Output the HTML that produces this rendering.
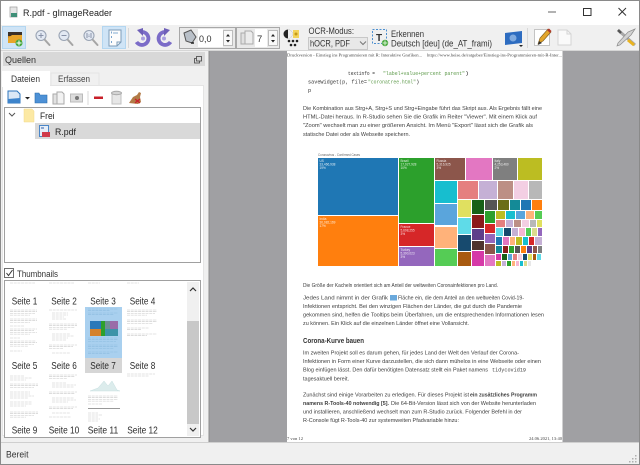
<!DOCTYPE html>
<html lang="de"><head><meta charset="utf-8"><title>R.pdf - gImageReader</title>
<style>
html,body{margin:0;padding:0;background:#f0f0f0}
body{width:640px;height:465px;overflow:hidden;position:relative;font-family:"Liberation Sans",sans-serif}
svg{position:absolute;left:0;top:0;filter:blur(.3px)}
</style></head><body>
<svg width="640" height="465" viewBox="0 0 640 465" font-family="Liberation Sans, sans-serif">
<rect width="640" height="465" fill="#f0f0f0"/>
<!-- title bar -->
<rect width="640" height="25" fill="#fff"/>
<rect x="0" y="0" width="640" height="1" fill="#8a8a8a"/>
<rect x="10" y="7" width="7" height="10" fill="#e6e6e6" stroke="#9a9a9a" stroke-width=".7"/>
<rect x="11" y="13" width="6" height="4" fill="#3f8f78"/>
<text x="23" y="16" font-size="9.600" fill="#222" textLength="89" lengthAdjust="spacingAndGlyphs">R.pdf - gImageReader</text>
<path d="M548 12h8" stroke="#666" stroke-width="1"/>
<rect x="583.500" y="8.500" width="7.500" height="7" fill="none" stroke="#333"/>
<path d="M618.500 8l7.500 7.500M626 8l-7.500 7.500" stroke="#333" stroke-width="1"/>
<!-- toolbar -->
<rect x="0" y="25" width="640" height="25" fill="#f0f0f0"/>
<rect x="2.500" y="26.500" width="23" height="22" fill="#cfe4f6" stroke="#b3d6f0"/>
<rect x="102.500" y="26.500" width="23" height="22" fill="#cfe4f6" stroke="#b3d6f0"/>
<path d="M8 32h14v11H8z" fill="#c98318"/><path d="M8 32h14v4H8z" fill="#3a3028"/><path d="M8 38l4-3h10v8H8z" fill="#e8a52a"/>
<circle cx="19" cy="43" r="3.500" fill="#46a73c"/><path d="M19 40.500v5M16.500 43h5" stroke="#fff" stroke-width="1"/>
<g fill="#e3e9f3" stroke="#9aa4b4" stroke-width="1.100">
<circle cx="41" cy="35.500" r="5"/><circle cx="64" cy="35.500" r="5"/><circle cx="89" cy="35.500" r="5"/></g>
<g stroke="#a5a5a5" stroke-width="2" stroke-linecap="round"><path d="M45 40l4.500 5M68 40l4.500 5M93 40l4.500 5"/></g>
<path d="M38.500 35.500h5M41 33v5M61.500 35.500h5" stroke="#8892a8" stroke-width="1"/>
<path d="M87 33v5M91 33v5M88.500 35h1M88.500 36.500h1" stroke="#8892a8" stroke-width="1"/>
<path d="M109 30h12v12l-4 4h-8z" fill="#fdfdfd" stroke="#7d9cb8"/><path d="M117 46v-4h4" fill="none" stroke="#7d9cb8"/>
<path d="M111.500 31.500v2M111.500 36v2M111.500 41v2M113 33h5" stroke="#5b8fc2" stroke-width=".8"/>
<rect x="128" y="28" width="1" height="20" fill="#d8d8d8"/>
<g fill="none" stroke="#7b6cc8" stroke-width="3.800">
<path d="M141 32a6.500 6.500 0 1 1-4.500 10"/><path d="M166 32a6.500 6.500 0 1 0 4.500 10"/></g>
<path d="M137 30l6-2v8zM170 30l-6-2v8z" fill="#6e5fb8"/>
<circle cx="143" cy="38.500" r="2" fill="#a99fe0"/><circle cx="164" cy="38.500" r="2" fill="#a99fe0"/>
<!-- spin boxes -->
<rect x="179.500" y="27.500" width="56" height="21" fill="#e9e9e9" stroke="#a8a8a8"/>
<rect x="236.500" y="27.500" width="43" height="21" fill="#e9e9e9" stroke="#a8a8a8"/>
<rect x="198" y="29" width="25" height="18" fill="#fff"/><rect x="255" y="29" width="12" height="18" fill="#fff"/>
<rect x="223.500" y="30.500" width="9" height="15" fill="#f8f8f8" stroke="#bcbcbc"/><rect x="268.500" y="30.500" width="9" height="15" fill="#f8f8f8" stroke="#bcbcbc"/>
<path d="M226 36.500l2-2.500 2 2.500zM226 40l2 2.500 2-2.500zM271 36.500l2-2.500 2 2.500zM271 40l2 2.500 2-2.500z" fill="#222"/>
<path d="M184 33l7-3 5 7-4 6-6-2z" fill="#b9c0c8" stroke="#555" stroke-width="1"/><path d="M191 43h3" stroke="#222" stroke-width="1.500"/>
<text x="199" y="42" font-size="9" fill="#333" textLength="12.500" lengthAdjust="spacingAndGlyphs">0,0</text>
<path d="M241 33h6v11h-6z" fill="#e0e0e0" stroke="#aaa"/><path d="M245 31h6l2 2v11h-8z" fill="#ececec" stroke="#aaa"/>
<text x="257" y="42" font-size="9.500" fill="#333">7</text>
<!-- contrast -->
<circle cx="288" cy="34" r="4.500" fill="#222"/><path d="M288 29.500a4.500 4.500 0 0 1 0 9z" fill="#eee"/>
<rect x="293" y="30" width="6" height="8" fill="#f3d35a"/><circle cx="296" cy="34" r="1.500" fill="#c49a18"/>
<g fill="#222"><circle cx="289" cy="41" r="1.300"/><circle cx="293" cy="41" r="1.300"/><circle cx="297" cy="41" r="1.300"/><circle cx="291" cy="45" r="1.300"/><circle cx="295" cy="45" r="1.300"/></g>
<!-- OCR -->
<text x="308.500" y="34" font-size="9" fill="#333" textLength="45.500" lengthAdjust="spacingAndGlyphs">OCR-Modus:</text>
<rect x="308.500" y="37.500" width="59" height="12" fill="#e8e8e8" stroke="#c8c8c8"/>
<text x="310" y="46.500" font-size="9" fill="#333" textLength="40" lengthAdjust="spacingAndGlyphs">hOCR, PDF</text>
<path d="M360 41.500l3 3 3-3" fill="none" stroke="#777"/>
<rect x="372.500" y="29.500" width="14" height="14" fill="none" stroke="#4d8fcf" stroke-dasharray="2 1.500"/>
<text x="376" y="41" font-size="10" font-weight="bold" fill="#333">T</text>
<circle cx="385" cy="43" r="3.200" fill="#48a83c"/><path d="M385 40.500v5M382.500 43h5" stroke="#d6f2d2" stroke-width="1"/>
<text x="391" y="37" font-size="9" fill="#333" textLength="33" lengthAdjust="spacingAndGlyphs">Erkennen</text>
<text x="391" y="46.500" font-size="9" fill="#333" textLength="101" lengthAdjust="spacingAndGlyphs">Deutsch [deu] (de_AT_frami)</text>
<path d="M505 33l17-2v12l-17 2z" fill="#2d6cc0"/><circle cx="513" cy="38" r="3.500" fill="#7faadf"/><path d="M519 45h4l-2 2z" fill="#222"/>
<rect x="527" y="28" width="1" height="20" fill="#d8d8d8"/>
<rect x="534.500" y="29.500" width="15" height="16" fill="#fff" stroke="#c4c4c4"/>
<path d="M538 44l2-6 8-9 3 3-8 9z" fill="#e3a52b" stroke="#7a5a20" stroke-width=".6"/><path d="M538 45l1-4 3 2z" fill="#333"/><path d="M547 30l3 3 1.500-2-2.500-2.500z" fill="#b23a2a"/>
<path d="M558 30h9l4 4v11h-13z" fill="#fafafa" stroke="#d4d4d4"/><path d="M567 30v4h4" fill="none" stroke="#d4d4d4"/>
<path d="M618 30l17 15" stroke="#a9a9a9" stroke-width="3"/><path d="M635 29l-7 3-10 11-1 3 3-1 11-10z" fill="#d2d2d2" stroke="#8c8c8c" stroke-width=".7"/>
<path d="M628 40l6 5" stroke="#e9b320" stroke-width="3"/><path d="M618 30l3 3" stroke="#555" stroke-width="2.500"/>
<rect x="0" y="50" width="640" height="1" fill="#d6d6d6"/>
<!-- gray view -->
<rect x="209" y="51" width="431" height="391" fill="#a0a0a3"/>
<rect x="208.500" y="51" width="1" height="391" fill="#8c8c8c"/>
<rect x="287" y="51" width="275.500" height="391" fill="#fff"/>
<!-- left dock -->
<rect x="3" y="52" width="202" height="14" fill="#d8d8d8"/>
<text x="5" y="63" font-size="9.200" fill="#333" textLength="31" lengthAdjust="spacingAndGlyphs">Quellen</text>
<rect x="194.500" y="58.500" width="5" height="4.500" fill="none" stroke="#444" stroke-width=".8"/><rect x="196.500" y="56.500" width="5" height="4.500" fill="#d8d8d8" stroke="#444" stroke-width=".8"/>
<rect x="51" y="73" width="48" height="13" fill="#f0f0f0" stroke="#e2e2e2" stroke-width=".8"/>
<rect x="2.500" y="85.500" width="201" height="350" fill="#fff" stroke="#e4e4e4"/>
<rect x="2" y="71" width="48" height="16" fill="#fff"/>
<text x="11" y="82" font-size="9" fill="#333" textLength="29" lengthAdjust="spacingAndGlyphs">Dateien</text>
<text x="58" y="82" font-size="9" fill="#444" textLength="32" lengthAdjust="spacingAndGlyphs">Erfassen</text>
<!-- small toolbar -->
<path d="M8 91h9l3 3v9H8z" fill="#dbe8f6" stroke="#2e75bc"/><path d="M8 99l12-1v5H8z" fill="#3d84cc"/>
<path d="M25 97h5l-2.500 2.500z" fill="#222"/>
<path d="M35 93h4l1 2h7v8H35z" fill="#4d91d6" stroke="#2a6cab" stroke-width=".6"/>
<path d="M53 94h6v10h-6z" fill="#e2e2e2" stroke="#aaa"/><path d="M57 92h5l2 2v10h-7z" fill="#f2f2f2" stroke="#aaa"/>
<rect x="70.500" y="94" width="12" height="8" fill="#dcdcdc" stroke="#bbb"/><circle cx="77" cy="98" r="2" fill="#777"/>
<rect x="87.500" y="91" width="1" height="14" fill="#d8d8d8"/>
<rect x="94" y="96.500" width="9" height="2.500" fill="#c8202a"/>
<path d="M112 93h9v11h-9z" fill="#e7e7e7" stroke="#c2c2c2"/><ellipse cx="116.500" cy="93" rx="5" ry="1.700" fill="#d4d4d4" stroke="#a8a8a8"/>
<path d="M129 103l4-6 4-2 2-3 2 1-1 4 1 5-3 2z" fill="#b27b47"/><path d="M135 99l5 4M140 99l-5 4" stroke="#c8202a" stroke-width="1.300"/>
<!-- tree -->
<rect x="4.500" y="107.500" width="196" height="155" fill="#fff" stroke="#a0a0a0"/>
<rect x="35" y="123" width="165" height="16" fill="#d9d9d9"/>
<path d="M9 113l3 3 3-3" fill="none" stroke="#555" stroke-width="1"/>
<path d="M24 109h8l2 2v11H24z" fill="#fce9a4" stroke="#f1d98a" stroke-width=".5"/>
<text x="40" y="119" font-size="9" fill="#222" textLength="14.500" lengthAdjust="spacingAndGlyphs">Frei</text>
<rect x="39.500" y="125.500" width="9" height="11" fill="#e6eef8" stroke="#4a86c8"/><rect x="42" y="132" width="8" height="5" fill="#d03a4a"/>
<path d="M41 128h3" stroke="#2d5fa8"/>
<text x="55" y="135" font-size="9.500" fill="#222" textLength="21" lengthAdjust="spacingAndGlyphs">R.pdf</text>
<!-- thumbnails -->
<rect x="4.500" y="268.500" width="9" height="9" fill="#fff" stroke="#6f6f6f"/>
<path d="M6.500 273l2 2.500 4-5.500" fill="none" stroke="#333" stroke-width="1"/>
<text x="17" y="277" font-size="9" fill="#333" textLength="41" lengthAdjust="spacingAndGlyphs">Thumbnails</text>
<rect x="4.500" y="280.500" width="196" height="157" fill="#fff" stroke="#a0a0a0"/>
<rect x="187" y="282" width="12" height="154" fill="#f0f0f0"/>
<rect x="187" y="321" width="12" height="103" fill="#c8c8c8"/>
<path d="M190 291l3-3 3 3M190 428l3 3 3-3" fill="none" stroke="#333" stroke-width="1.200"/>
<rect x="85" y="307" width="37" height="51" fill="#a9d0ef"/>
<rect x="85" y="358" width="37" height="15" fill="#d6d6d6"/>
<rect x="90" y="321" width="11" height="8" fill="#2a78b8"/><rect x="90" y="329" width="11" height="7" fill="#d4812a"/>
<rect x="101" y="321" width="4" height="15" fill="#2ca02c"/><rect x="105" y="321" width="5" height="8" fill="#6d8f96"/><rect x="110" y="321" width="8" height="8" fill="#9a6ca8"/><rect x="105" y="329" width="13" height="7" fill="#3d93a8"/>
<!-- thumb text lines -->
<g stroke="#c8c8c8" stroke-width=".55" fill="none" stroke-dasharray="3 .7">
<path d="M10 283h25M49 283h25M88 283h12M127 283h12"/>
<path d="M10 310h27M10 311.700h27M10 313.400h25M10 315.100h20M10 319h27M10 320.700h27M10 322.400h20M10 326h14M10 329h27M10 330.700h24M10 332.400h27M10 334.100h20M10 338h10M10 341h26M10 342.700h27M10 344.400h24M10 346.100h18M10 351h12"/>
<path d="M49 310h28M52 313h16M52 315h16M52 317h12M52 319h14M49 324h28M49 325.700h28M49 327.400h26M49 329.100h18M52 334h18M52 336h22M52 338h16M52 340h14M49 345h28M49 346.700h24M49 348.400h14M52 353h18"/>
<path d="M127 310h30M127 311.700h30M127 313.400h28M127 315.100h20M127 320h30M127 321.700h30M127 323.400h26M127 328h22M127 329.700h14M127 334h30M127 335.700h20"/>
<path d="M10 376h14M10 378h22M10 380h16M10 384h28M10 385.700h28M10 387.400h24M10 392h20M10 394h20M10 396h24M10 398h18M10 402h22M10 404h22M10 406h16M10 412h28M10 413.700h28M10 415.400h24M10 417.100h16"/>
<path d="M49 375h28M49 376.700h26M49 378.400h18M52 383h14M52 385h24M52 387h22M49 392h28M49 393.700h26M52 398h22M52 400h24M52 402h16M49 407h28M49 408.700h24M52 413h18M49 417h22"/>
<path d="M88 396h30M88 397.700h30M88 399.400h30M88 401.100h26M88 404h14M88 413h10M88 415h14M88 417h10M88 419h12M88 421h10"/>
<path d="M127 374h28M127 376h22"/>
</g>
<g stroke="#8dbbdf" stroke-width=".55" fill="none" stroke-dasharray="3 .7"><path d="M88 309h30M88 310.700h22M88 313h30M88 314.700h26M88 338h30M88 339.700h30M88 341.400h28M88 345h30M88 346.700h30M88 348.400h26M88 352h30M88 353.700h22"/></g>
<path d="M88 408.500h32" stroke="#777" stroke-width=".7"/>
<path d="M90 391l8-3 6-7 4 5 4-5 5 9 3 1H90z" fill="#dcecec" stroke="#bcd9db" stroke-width=".4"/>
<g font-size="10.200" fill="#2a2a2a" text-anchor="middle">
<text x="24.500" y="304.500" textLength="25.500" lengthAdjust="spacingAndGlyphs">Seite 1</text><text x="64" y="304.500" textLength="25.500" lengthAdjust="spacingAndGlyphs">Seite 2</text><text x="103" y="304.500" textLength="25.500" lengthAdjust="spacingAndGlyphs">Seite 3</text><text x="142.500" y="304.500" textLength="25.500" lengthAdjust="spacingAndGlyphs">Seite 4</text>
<text x="24.500" y="369" textLength="25.500" lengthAdjust="spacingAndGlyphs">Seite 5</text><text x="64" y="369" textLength="25.500" lengthAdjust="spacingAndGlyphs">Seite 6</text><text x="103" y="369" textLength="25.500" lengthAdjust="spacingAndGlyphs">Seite 7</text><text x="142.500" y="369" textLength="25.500" lengthAdjust="spacingAndGlyphs">Seite 8</text>
<text x="24.500" y="433.500" textLength="25.500" lengthAdjust="spacingAndGlyphs">Seite 9</text><text x="64" y="433.500" textLength="30.500" lengthAdjust="spacingAndGlyphs">Seite 10</text><text x="103" y="433.500" textLength="30.500" lengthAdjust="spacingAndGlyphs">Seite 11</text><text x="142.500" y="433.500" textLength="30.500" lengthAdjust="spacingAndGlyphs">Seite 12</text>
</g>
<!-- page content -->
<g font-family="Liberation Serif, serif" font-size="4.400" fill="#444">
<text x="287" y="56.500" textLength="135" lengthAdjust="spacingAndGlyphs">Druckversion - Einstieg ins Programmieren mit R: Interaktive Grafiken...</text>
<text x="427" y="56.500" textLength="135" lengthAdjust="spacingAndGlyphs">https://www.heise.de/ratgeber/Einstieg-ins-Programmieren-mit-R-Inter...</text>
<text x="287" y="440" textLength="16" lengthAdjust="spacingAndGlyphs">7 von 12</text>
<text x="529" y="440" textLength="33" lengthAdjust="spacingAndGlyphs">24.06.2021, 13:40</text>
</g>
<g font-family="Liberation Mono, monospace" font-size="5.300" fill="#333">
<text x="348" y="75" textLength="27" lengthAdjust="spacingAndGlyphs">textinfo =</text><text x="383" y="75" fill="#5d9a4a" textLength="82" lengthAdjust="spacingAndGlyphs">"label+value+percent parent"</text><text x="465" y="75" textLength="4" lengthAdjust="spacingAndGlyphs">)</text>
<text x="308" y="83.500" textLength="59" lengthAdjust="spacingAndGlyphs">saveWidget(p, file=</text><text x="368" y="83.500" fill="#5d9a4a" textLength="48" lengthAdjust="spacingAndGlyphs">"coronatree.html"</text><text x="416" y="83.500" textLength="3.500" lengthAdjust="spacingAndGlyphs">)</text>
<text x="308" y="92">p</text>
</g>
<g font-size="5.900" fill="#3d3d3d">
<text x="303" y="110" textLength="239" lengthAdjust="spacingAndGlyphs">Die Kombination aus Strg+A, Strg+S und Strg+Eingabe führt das Skript aus. Als Ergebnis fällt eine</text>
<text x="303" y="118.500" textLength="234" lengthAdjust="spacingAndGlyphs">HTML-Datei heraus. In R-Studio sehen Sie die Grafik im Reiter "Viewer". Mit einem Klick auf</text>
<text x="303" y="127" textLength="230" lengthAdjust="spacingAndGlyphs">"Zoom" wechselt man zu einer größeren Ansicht. Im Menü "Export" lässt sich die Grafik als</text>
<text x="303" y="136" textLength="107" lengthAdjust="spacingAndGlyphs">statische Datei oder als Webseite speichern.</text>
<text x="303" y="287" font-size="5" textLength="195" lengthAdjust="spacingAndGlyphs">Die Größe der Kacheln orientiert sich am Anteil der weltweiten Coronainfektionen pro Land.</text>
<text x="303" y="299.500" textLength="85" lengthAdjust="spacingAndGlyphs">Jedes Land nimmt in der Grafik</text><rect x="390" y="295" width="7" height="5.500" fill="#6aa9dc"/>
<text x="398" y="299.500" textLength="126" lengthAdjust="spacingAndGlyphs">Fläche ein, die dem Anteil an den weltweiten Covid-19-</text>
<text x="303" y="308" textLength="219" lengthAdjust="spacingAndGlyphs">Infektionen entspricht. Bei den winzigen Flächen der Länder, die gut durch die Pandemie</text>
<text x="303" y="316.500" textLength="241" lengthAdjust="spacingAndGlyphs">gekommen sind, helfen die Tooltips beim Überfahren, um die entsprechenden Informationen lesen</text>
<text x="303" y="325" textLength="166" lengthAdjust="spacingAndGlyphs">zu können. Ein Klick auf die einzelnen Länder öffnet eine Vollansicht.</text>
<text x="303" y="343" font-size="7" font-weight="bold" fill="#333" textLength="61" lengthAdjust="spacingAndGlyphs">Corona-Kurve bauen</text>
<text x="303" y="354.500" textLength="216" lengthAdjust="spacingAndGlyphs">Im zweiten Projekt soll es darum gehen, für jedes Land der Welt den Verlauf der Corona-</text>
<text x="303" y="363" textLength="238" lengthAdjust="spacingAndGlyphs">Infektionen in Form einer Kurve darzustellen, die sich dann mühelos in eine Webseite oder einen</text>
<text x="303" y="371.500" textLength="185" lengthAdjust="spacingAndGlyphs">Blog einfügen lässt. Den dafür benötigten Datensatz stellt ein Paket namens</text>
<text x="492" y="371.500" font-family="Liberation Mono, monospace" textLength="34" lengthAdjust="spacingAndGlyphs">tidycovid19</text>
<text x="303" y="380.500" textLength="46" lengthAdjust="spacingAndGlyphs">tagesaktuell bereit.</text>
<text x="303" y="396.500" textLength="166" lengthAdjust="spacingAndGlyphs">Zunächst sind einige Vorarbeiten zu erledigen. Für dieses Projekt ist</text>
<text x="470" y="396.500" font-weight="bold" textLength="67" lengthAdjust="spacingAndGlyphs">ein zusätzliches Programm</text>
<text x="303" y="405" font-weight="bold" textLength="86" lengthAdjust="spacingAndGlyphs">namens R-Tools-40 notwendig [5].</text>
<text x="391" y="405" textLength="145" lengthAdjust="spacingAndGlyphs">Die 64-Bit-Version lässt sich von der Website herunterladen</text>
<text x="303" y="413.500" textLength="219" lengthAdjust="spacingAndGlyphs">und installieren, anschließend wechselt man zum R-Studio zurück. Folgender Befehl in der</text>
<text x="303" y="422" textLength="156" lengthAdjust="spacingAndGlyphs">R-Console fügt R-Tools-40 zur systemweiten Pfadvariable hinzu:</text>
</g>
<!-- treemap -->
<text x="318" y="156" font-size="3.400" fill="#666" textLength="42" lengthAdjust="spacingAndGlyphs">Coronavirus - Confirmed Cases</text>
<g>
<rect x="318" y="158" width="80" height="57" fill="#1f77b4"/><rect x="318" y="216" width="80" height="50" fill="#ff7f0e"/>
<rect x="399" y="158" width="35" height="65" fill="#2ca02c"/><rect x="399" y="224" width="35" height="22" fill="#d62728"/><rect x="399" y="247" width="35" height="19" fill="#9467bd"/>
<rect x="435" y="158" width="30" height="22" fill="#8c564b"/><rect x="466" y="158" width="26" height="22" fill="#e377c2"/><rect x="493" y="158" width="24" height="22" fill="#7f7f7f"/><rect x="518" y="158" width="24" height="22" fill="#bcbd22"/>
<rect x="435" y="181" width="22" height="22" fill="#17becf"/><rect x="435" y="204" width="22" height="21" fill="#5aa5dc"/><rect x="435" y="227" width="22" height="21" fill="#ffb27a"/><rect x="435" y="249" width="22" height="17" fill="#55cc55"/>
<rect x="458" y="181" width="20" height="18" fill="#e57f7f"/><rect x="479" y="181" width="18" height="18" fill="#c5b0d5"/><rect x="498" y="181" width="15" height="18" fill="#bc8f85"/><rect x="514" y="181" width="14" height="18" fill="#f3cfe3"/><rect x="529" y="181" width="13" height="18" fill="#b8b8b8"/>
<rect x="458" y="200" width="13" height="17" fill="#e0e060"/><rect x="458" y="218" width="13" height="16" fill="#5fdbe8"/><rect x="458" y="235" width="13" height="16" fill="#174a6e"/><rect x="458" y="252" width="13" height="14" fill="#a85a10"/>
<rect x="472" y="200" width="12" height="14" fill="#176017"/><rect x="472" y="215" width="12" height="13" fill="#8b1a1b"/><rect x="472" y="229" width="12" height="11" fill="#5e3f8a"/><rect x="472" y="241" width="12" height="9" fill="#4e342e"/><rect x="472" y="251" width="12" height="15" fill="#d63aa8"/>
<rect x="485" y="200" width="12" height="10" fill="#555"/><rect x="498" y="200" width="11" height="10" fill="#6b6d16"/><rect x="510" y="200" width="10" height="10" fill="#148a97"/><rect x="521" y="200" width="10" height="10" fill="#1f77b4"/><rect x="532" y="200" width="10" height="10" fill="#ff7f0e"/>
<rect x="485" y="211" width="10" height="12" fill="#2ca02c"/><rect x="485" y="224" width="10" height="9" fill="#d62728"/><rect x="485" y="234" width="10" height="9" fill="#9467bd"/><rect x="485" y="244" width="10" height="10" fill="#8c564b"/><rect x="485" y="255" width="10" height="11" fill="#e377c2"/>
<rect x="496" y="211" width="9" height="8" fill="#bcbd22"/><rect x="506" y="211" width="9" height="8" fill="#17becf"/><rect x="516" y="211" width="9" height="8" fill="#5aa5dc"/><rect x="526" y="211" width="8" height="8" fill="#ffb27a"/><rect x="535" y="211" width="7" height="8" fill="#55cc55"/>
<rect x="496" y="220" width="9" height="7" fill="#e57f7f"/><rect x="506" y="220" width="7" height="7" fill="#c5b0d5"/><rect x="514" y="220" width="7" height="7" fill="#bc8f85"/><rect x="522" y="220" width="7" height="7" fill="#f3cfe3"/><rect x="530" y="220" width="6" height="7" fill="#b8b8b8"/><rect x="537" y="220" width="5" height="7" fill="#e0e060"/>
<rect x="496" y="228" width="7" height="8" fill="#5fdbe8"/><rect x="504" y="228" width="7" height="8" fill="#174a6e"/><rect x="512" y="228" width="6" height="8" fill="#c5b0d5"/><rect x="519" y="228" width="6" height="8" fill="#f7b6d2"/><rect x="526" y="228" width="5" height="8" fill="#55cc55"/><rect x="532" y="228" width="5" height="8" fill="#dbdb8d"/><rect x="538" y="228" width="4" height="8" fill="#9467bd"/>
<rect x="496" y="237" width="6" height="8" fill="#1f77b4"/><rect x="503" y="237" width="6" height="8" fill="#e377c2"/><rect x="510" y="237" width="5" height="8" fill="#ffb27a"/><rect x="516" y="237" width="6" height="8" fill="#bcbd22"/><rect x="523" y="237" width="5" height="8" fill="#17becf"/><rect x="529" y="237" width="5" height="8" fill="#d62728"/><rect x="535" y="237" width="7" height="8" fill="#c5b0d5"/>
<rect x="496" y="246" width="6" height="7" fill="#148a97"/><rect x="503" y="246" width="5" height="7" fill="#8b1a1b"/><rect x="509" y="246" width="5" height="7" fill="#2ca02c"/><rect x="515" y="246" width="5" height="7" fill="#555"/><rect x="521" y="246" width="5" height="7" fill="#ff7f0e"/><rect x="527" y="246" width="5" height="7" fill="#5e3f8a"/><rect x="533" y="246" width="4" height="7" fill="#8c564b"/><rect x="538" y="246" width="4" height="7" fill="#7f7f7f"/>
<rect x="496" y="254" width="5" height="6" fill="#d63aa8"/><rect x="502" y="254" width="5" height="6" fill="#176017"/><rect x="508" y="254" width="4" height="6" fill="#5aa5dc"/><rect x="513" y="254" width="4" height="6" fill="#e57f7f"/><rect x="518" y="254" width="4" height="6" fill="#f3cfe3"/><rect x="523" y="254" width="4" height="6" fill="#174a6e"/><rect x="528" y="254" width="4" height="6" fill="#e0e060"/><rect x="533" y="254" width="3" height="6" fill="#a85a10"/><rect x="537" y="254" width="4" height="6" fill="#5fdbe8"/>
<rect x="496" y="261" width="5" height="5" fill="#bcbd22"/><rect x="502" y="261" width="4" height="5" fill="#c5b0d5"/><rect x="507" y="261" width="4" height="5" fill="#2ca02c"/><rect x="512" y="261" width="3" height="5" fill="#ffb27a"/><rect x="516" y="261" width="3" height="5" fill="#f7b6d2"/><rect x="520" y="261" width="3" height="5" fill="#17becf"/><rect x="524" y="261" width="3" height="5" fill="#dbdb8d"/><rect x="528" y="261" width="3" height="5" fill="#e8e8e8"/>
</g>
<g font-size="3.200" fill="#fff" opacity=".85">
<text x="319.500" y="162">US</text><text x="319.500" y="165.500">33,466,938</text><text x="319.500" y="169">19%</text>
<text x="319.500" y="220">India</text><text x="319.500" y="223.500">30,082,169</text><text x="319.500" y="227">17%</text>
<text x="400.500" y="162">Brazil</text><text x="400.500" y="165.500">17,927,928</text><text x="400.500" y="169">10%</text>
<text x="400.500" y="228">France</text><text x="400.500" y="231.500">5,698,255</text><text x="400.500" y="235">3%</text>
<text x="400.500" y="251">Turkey</text><text x="400.500" y="254.500">5,390,023</text><text x="400.500" y="258">3%</text>
<text x="436.500" y="162">Russia</text><text x="436.500" y="165.500">5,316,925</text><text x="436.500" y="169">3%</text>
<text x="494.500" y="162">Italy</text><text x="494.500" y="165.500">4,253,460</text><text x="494.500" y="169">2%</text>
</g>
<!-- status bar -->
<rect x="0" y="442" width="640" height="1" fill="#cfcfcf"/>
<text x="6" y="457.500" font-size="9.200" fill="#333" textLength="22.500" lengthAdjust="spacingAndGlyphs">Bereit</text>
<g fill="#b0b0b0"><rect x="635" y="455" width="1.500" height="1.500"/><rect x="632" y="458" width="1.500" height="1.500"/><rect x="635" y="458" width="1.500" height="1.500"/><rect x="629" y="461" width="1.500" height="1.500"/><rect x="632" y="461" width="1.500" height="1.500"/><rect x="635" y="461" width="1.500" height="1.500"/></g>
<rect x="0" y="464" width="640" height="1" fill="#8a8a8a"/>
<rect x="0" y="0" width="1" height="465" fill="#8a8a8a"/><rect x="639" y="0" width="1" height="465" fill="#8a8a8a"/>
</svg>
</body></html>
